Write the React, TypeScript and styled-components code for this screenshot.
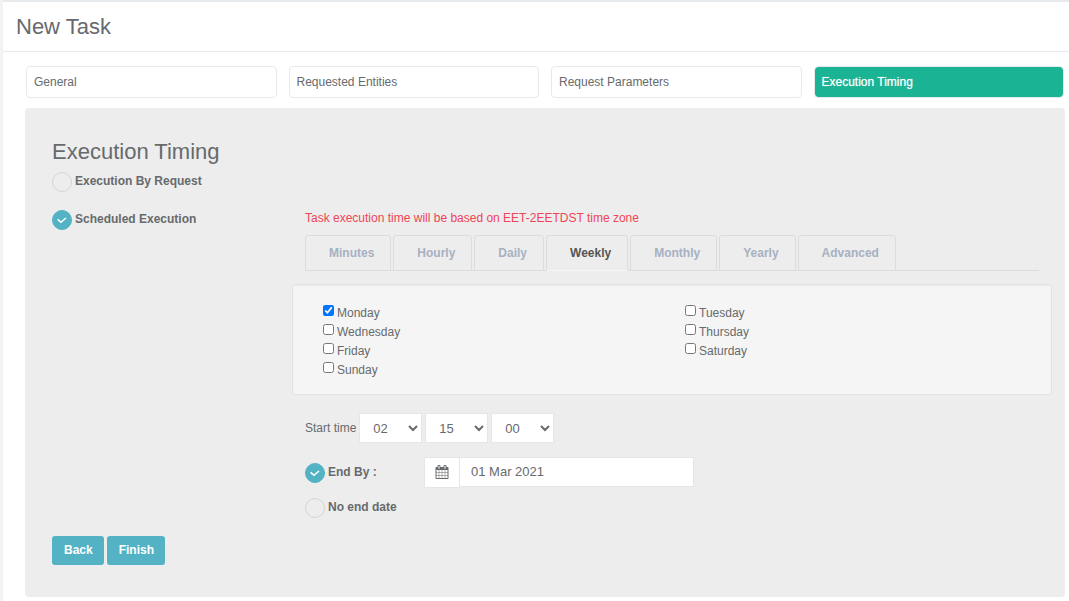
import React, { useState } from 'react';
import styled, { createGlobalStyle } from 'styled-components';

const GlobalStyle = createGlobalStyle`
  *, *::before, *::after { box-sizing: border-box; }
  body {
    margin: 0;
    background: #fff;
    color: #676a6c;
    font-family: "Liberation Sans", Arial, sans-serif;
    font-size: 12px;
    line-height: 18px;
  }
  button, input, select { font-family: inherit; color: inherit; margin: 0; }
`;

const Page = styled.div`
  min-height: 100vh;
  border-left: 3px solid #f3f3f4;
`;

const Header = styled.header`
  border-top: 2px solid #e7eaec;
  border-bottom: 1px solid #e7eaec;
  padding: 13px 13px 12px;
`;

const PageTitle = styled.h1`
  margin: 0;
  font-size: 22px;
  line-height: 24px;
  font-weight: 400;
`;

const Main = styled.main`
  padding: 14px 4px 4px 22px;
`;

const Steps = styled.nav`
  display: grid;
  grid-template-columns: repeat(4, 1fr);
  gap: 12px;
  padding: 0 1px;
  margin-bottom: 10px;
`;

const Step = styled.button<{ $active?: boolean }>`
  height: 32px;
  padding: 0 7px;
  border: 1px solid #e7eaec;
  border-radius: 4px;
  background: ${p => (p.$active ? '#1ab394' : '#fff')};
  background-clip: padding-box;
  color: ${p => (p.$active ? '#fff' : 'inherit')};
  font-size: 12px;
  text-align: left;
  text-shadow: ${p => (p.$active ? '0 0 1px rgba(255, 255, 255, 0.6)' : 'none')};
`;

const Panel = styled.section`
  background: #ededed;
  border-radius: 4px;
  padding: 32px 13px 32px 27px;
`;

const PanelTitle = styled.h2`
  margin: 0 0 7px;
  font-size: 22px;
  line-height: 24px;
  font-weight: 400;
`;

const Columns = styled.div`
  display: grid;
  grid-template-columns: 240px minmax(0, 1fr);
`;

const Modes = styled.div`
  display: flex;
  flex-direction: column;
  gap: 17px;
`;

const RadioLabel = styled.label`
  display: flex;
  align-items: flex-start;
  gap: 3px;
  height: 21px;
  line-height: 20px;
  font-weight: 700;
`;

const RadioBox = styled.span`
  display: grid;
  flex: none;
  width: 20px;
  height: 20px;
  margin-top: 1px;

  > * { grid-area: 1 / 1; }
  > svg { pointer-events: none; }
`;

const RadioInput = styled.input`
  appearance: none;
  width: 20px;
  height: 20px;
  border: 1px solid #d5d5ce;
  border-radius: 50%;

  &:checked {
    border-color: #53b2c4;
    background: #53b2c4;
  }
`;

const Schedule = styled.div`
  padding-top: 38px;
`;

const Inset = styled.div`
  padding: 0 13px;
`;

const Notice = styled.p`
  margin: 0 0 8px;
  color: #ed4556;
`;

const TabList = styled.div`
  display: flex;
  gap: 2px;
  border-bottom: 1px solid #dcdcdc;
  margin-bottom: 13px;
`;

const Tab = styled.button<{ $active?: boolean }>`
  height: 36px;
  margin-bottom: -1px;
  padding: 0 16px 0 23px;
  border: 1px solid #dcdcdc;
  border-bottom-color: ${p => (p.$active ? '#f5f5f5' : '#dcdcdc')};
  border-radius: 3px 3px 0 0;
  background: #ededed;
  color: ${p => (p.$active ? '#555' : '#a7b1c2')};
  font-size: 12px;
  font-weight: 700;
`;

const DayBox = styled.div`
  display: grid;
  grid-template-columns: 1fr 1fr;
  min-height: 111px;
  align-content: start;
  padding: 18px 4px 14px 30px;
  border: 1px solid #e3e3e3;
  border-radius: 3px;
  background: #f5f5f5;
  box-shadow: inset 0 1px 1px rgba(0, 0, 0, 0.05);
  margin-bottom: 18px;
`;

const DayLabel = styled.label`
  display: flex;
  align-items: flex-start;
  gap: 3px;
  height: 19px;
  line-height: 20px;

  input {
    width: 11px;
    height: 11px;
    margin-top: 2px;
  }
`;

const TimeRow = styled.div`
  display: flex;
  align-items: center;
  gap: 3px;
  margin-bottom: 14px;
`;

const TimeSelect = styled.select`
  width: 63px;
  height: 30px;
  padding: 0 0 0 9px;
  border: 1px solid #e5e6e7;
  border-radius: 0;
  background: #fff;
  font-size: 13px;
`;

const EndRow = styled.div`
  display: grid;
  grid-template-columns: 119px minmax(0, 270px);
  margin-bottom: 9px;
`;

const EndLabel = styled(RadioLabel)`
  height: 26px;
  padding-top: 5px;
`;

const DateGroup = styled.div`
  display: flex;
  align-items: flex-start;
`;

const DateAddon = styled.span`
  display: grid;
  place-items: center;
  width: 35px;
  height: 31px;
  flex: none;
  border: 1px solid #e5e6e7;
  border-right: 0;
  background: #fff;
  padding-bottom: 2px;
`;

const DateInput = styled.input`
  flex: 1;
  min-width: 0;
  height: 30px;
  padding: 0 11px 2px;
  border: 1px solid #e5e6e7;
  background: #fff;
  font-size: 13px;
`;

const Actions = styled.div`
  display: flex;
  gap: 3px;
  margin-top: 18px;
`;

const ActionButton = styled.button`
  height: 29px;
  padding: 0 11px 2px 12px;
  border: 0;
  border-radius: 3px;
  background: #53b2c4;
  color: #fff;
  font-size: 12px;
  font-weight: 700;
`;

function CalendarIcon() {
  return (
    <svg width="14" height="14" viewBox="0 0 1792 1792" fill="#676a6c" aria-hidden="true">
      <path d="M192 1664h288v-288h-288v288zM544 1664h320v-288h-320v288zM192 1312h288v-320h-288v320zM544 1312h320v-320h-320v320zM192 928h288v-288h-288v288zM928 1664h320v-288h-320v288zM544 928h320v-288h-320v288zM1312 1664h288v-288h-288v288zM928 1312h320v-320h-320v320zM576 448v-288q0-13-9.5-22.5t-22.5-9.5h-64q-13 0-22.5 9.5t-9.5 22.5v288q0 13 9.5 22.5t22.5 9.5h64q13 0 22.5-9.5t9.5-22.5zM1312 1312h288v-320h-288v320zM928 928h320v-288h-320v288zM1312 928h288v-288h-288v288zM1344 448v-288q0-13-9.5-22.5t-22.5-9.5h-64q-13 0-22.5 9.5t-9.5 22.5v288q0 13 9.5 22.5t22.5 9.5h64q13 0 22.5-9.5t9.5-22.5zM1728 384v1280q0 52-38 90t-90 38h-1408q-52 0-90-38t-38-90v-1280q0-52 38-90t90-38h128v-96q0-66 47-113t113-47h64q66 0 113 47t47 113v96h384v-96q0-66 47-113t113-47h64q66 0 113 47t47 113v96h128q52 0 90 38t38 90z" />
    </svg>
  );
}

interface RadioProps {
  name: string;
  checked: boolean;
  onSelect: () => void;
}

function Radio({ name, checked, onSelect }: RadioProps) {
  return (
    <RadioBox>
      <RadioInput type="radio" name={name} checked={checked} onChange={onSelect} />
      {checked && (
        <svg width="20" height="20" viewBox="0 0 20 20" fill="none" aria-hidden="true">
          <path d="M5.6 9.4l3.4 2.8 5-4.2" stroke="#fff" strokeWidth="1.5" />
        </svg>
      )}
    </RadioBox>
  );
}

const steps = ['General', 'Requested Entities', 'Request Parameters', 'Execution Timing'];
const tabs = ['Minutes', 'Hourly', 'Daily', 'Weekly', 'Monthly', 'Yearly', 'Advanced'];
const days = ['Monday', 'Tuesday', 'Wednesday', 'Thursday', 'Friday', 'Saturday', 'Sunday'];

const range = (count: number) => Array.from({ length: count }, (_, i) => String(i).padStart(2, '0'));
const times = [
  { label: 'Hours', initial: '02', options: range(24) },
  { label: 'Minutes', initial: '15', options: range(60) },
  { label: 'Seconds', initial: '00', options: range(60) },
];

export default function App() {
  const [mode, setMode] = useState('scheduled');
  const [tab, setTab] = useState('Weekly');
  const [end, setEnd] = useState('by');

  return (
    <>
      <GlobalStyle />
      <Page>
        <Header>
          <PageTitle>New Task</PageTitle>
        </Header>
        <Main>
          <Steps>
            {steps.map(step => (
              <Step key={step} type="button" $active={step === 'Execution Timing'}>
                {step}
              </Step>
            ))}
          </Steps>
          <Panel>
            <PanelTitle>Execution Timing</PanelTitle>
            <Columns>
              <Modes>
                <RadioLabel>
                  <Radio name="mode" checked={mode === 'request'} onSelect={() => setMode('request')} />
                  Execution By Request
                </RadioLabel>
                <RadioLabel>
                  <Radio name="mode" checked={mode === 'scheduled'} onSelect={() => setMode('scheduled')} />
                  Scheduled Execution
                </RadioLabel>
              </Modes>
              <Schedule>
                <Inset>
                  <Notice>Task execution time will be based on EET-2EETDST time zone</Notice>
                  <TabList role="tablist">
                    {tabs.map(name => (
                      <Tab
                        key={name}
                        type="button"
                        role="tab"
                        aria-selected={tab === name}
                        $active={tab === name}
                        onClick={() => setTab(name)}
                      >
                        {name}
                      </Tab>
                    ))}
                  </TabList>
                </Inset>
                <DayBox>
                  {days.map(day => (
                    <DayLabel key={day}>
                      <input type="checkbox" defaultChecked={day === 'Monday'} />
                      {day}
                    </DayLabel>
                  ))}
                </DayBox>
                <Inset>
                  <TimeRow>
                    <span>Start time</span>
                    {times.map(({ label, initial, options }) => (
                      <TimeSelect key={label} aria-label={label} defaultValue={initial}>
                        {options.map(value => (
                          <option key={value}>{value}</option>
                        ))}
                      </TimeSelect>
                    ))}
                  </TimeRow>
                  <EndRow>
                    <EndLabel>
                      <Radio name="end" checked={end === 'by'} onSelect={() => setEnd('by')} />
                      End By :
                    </EndLabel>
                    <DateGroup>
                      <DateAddon>
                        <CalendarIcon />
                      </DateAddon>
                      <DateInput type="text" aria-label="End date" defaultValue="01 Mar 2021" />
                    </DateGroup>
                  </EndRow>
                  <RadioLabel>
                    <Radio name="end" checked={end === 'never'} onSelect={() => setEnd('never')} />
                    No end date
                  </RadioLabel>
                </Inset>
              </Schedule>
            </Columns>
            <Actions>
              <ActionButton type="button">Back</ActionButton>
              <ActionButton type="button">Finish</ActionButton>
            </Actions>
          </Panel>
        </Main>
      </Page>
    </>
  );
}
